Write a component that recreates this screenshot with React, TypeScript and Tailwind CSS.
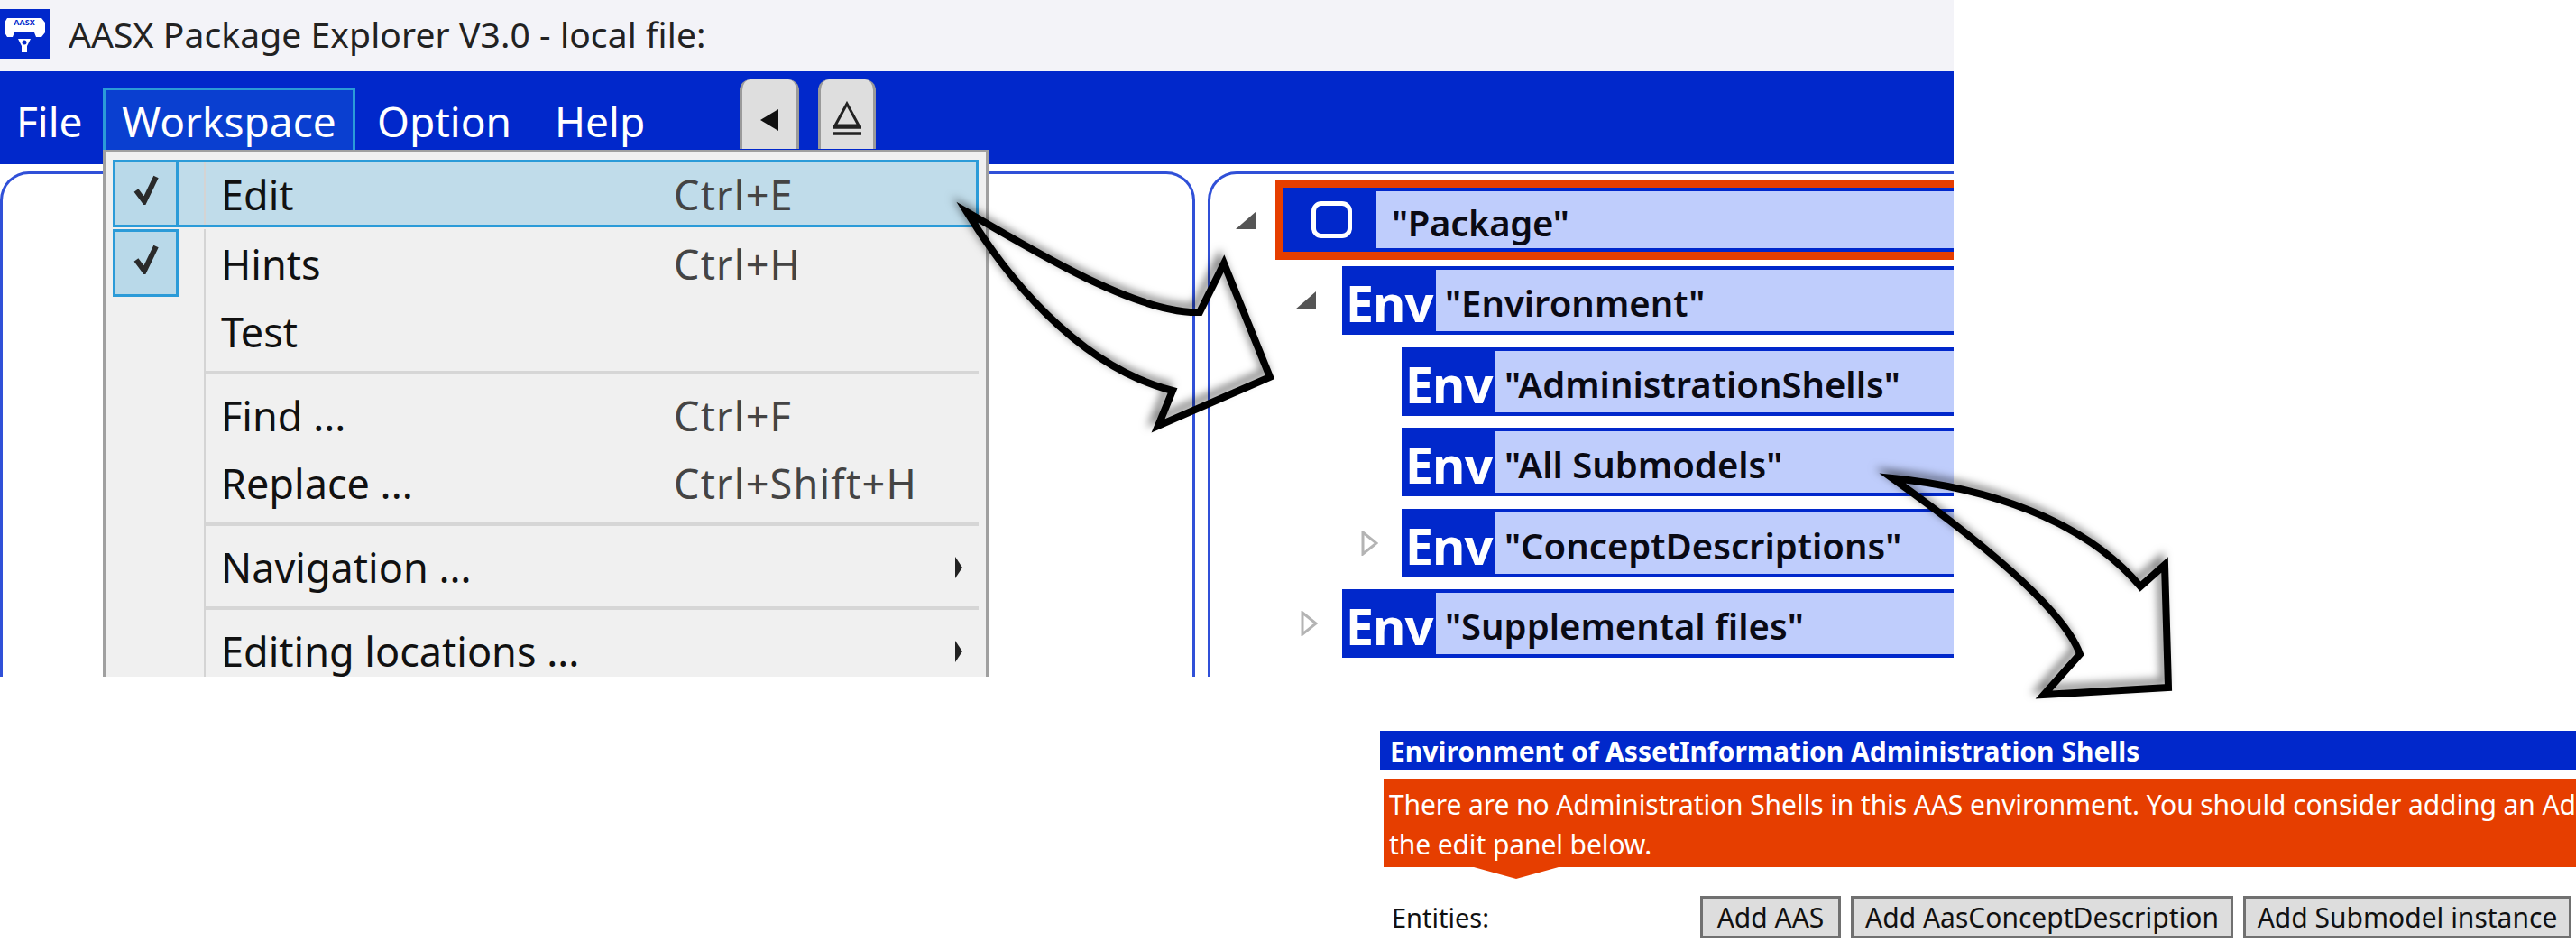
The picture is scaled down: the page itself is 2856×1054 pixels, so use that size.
import React from "react";

function Logo() {
  return (
    <svg width="55" height="55" viewBox="0 0 55 55" className="shrink-0">
      <rect width="55" height="55" fill="#0128cb" />
      <path d="M8 10h38l4 5v11l-4 5h-6l-2-5H16l-2 5H8l-3-5V15z" fill="#fff" />
      <text x="27" y="18" textAnchor="middle" fontSize="9" fontWeight="700" fill="#0128cb" fontFamily="Noto Sans, sans-serif">AASX</text>
      <path d="M20 33h14l-4 8v7h-6v-7z" fill="#fff" />
      <circle cx="27" cy="37" r="2.5" fill="#0128cb" />
    </svg>
  );
}

function MenuRow({ label, shortcut, checked, active, submenu }: { label: string; shortcut?: string; checked?: boolean; active?: boolean; submenu?: boolean }) {
  return (
    <div className={`flex h-[75px] items-stretch ${active ? "bg-[#c0dcea] outline-[3px] -outline-offset-[3px] outline-[#2b9bd8]" : ""}`}>
      <div className={`flex w-[73px] shrink-0 items-center justify-center pb-[10px] ${checked ? "border-[3px] border-[#2b9bd8] bg-[#b9d9e9]" : ""}`}>
        {checked && (
          <svg width="30" height="34" viewBox="0 0 30 34">
            <path d="M4 18l9 12L26 3" fill="none" stroke="#2a2a2a" strokeWidth="6" />
          </svg>
        )}
      </div>
      <div className="ml-[28px] flex flex-1 items-center border-l-[2px] border-[#d4d4d4] pt-[2px] pl-[17px]">
        <span className="w-[502px] text-[45px] leading-none text-[#111]">{label}</span>
        <span className="text-[45px] leading-none tracking-[1.2px] text-[#444]">{shortcut}</span>
        {submenu && (
          <svg width="10" height="24" viewBox="0 0 10 24" className="ml-auto mr-[17px]">
            <path d="M1 0l8 12L1 24z" fill="#222" />
          </svg>
        )}
      </div>
    </div>
  );
}

function MenuSeparator() {
  return (
    <div className="ml-[101px] flex h-[18px] items-center border-l-[2px] border-[#d4d4d4]">
      <div className="h-[4px] flex-1 bg-[#d6d6d6]" />
    </div>
  );
}

function Caret({ open, className }: { open?: boolean; className: string }) {
  if (open) {
    return (
      <svg width="23" height="20" viewBox="0 0 23 20" className={className}>
        <path d="M0 20L23 0v20z" fill="#555" />
      </svg>
    );
  }
  return (
    <svg width="19" height="28" viewBox="0 0 19 28" className={className}>
      <path d="M2 2l15 12L2 26z" fill="#fff" stroke="#b4b4b4" strokeWidth="3" />
    </svg>
  );
}

function EnvRow({ label, indent, caret }: { label: string; indent: string; caret?: React.ReactNode }) {
  return (
    <div className={`flex items-center ${indent}`}>
      <div className="flex w-[66px] shrink-0 justify-center">{caret}</div>
      <div className="flex h-[76px] flex-1 border-y-[4px] border-[#0128cb] bg-[#bfcdfc]">
        <div className="flex w-[104px] shrink-0 items-center justify-center bg-[#0128cb] pt-[4px] text-[56px] leading-none font-bold tracking-[-1px] text-white">Env</div>
        <div className="flex items-center pt-[6px] pl-[10px] text-[40px] leading-none font-semibold whitespace-nowrap text-[#0a0a14]">{label}</div>
      </div>
    </div>
  );
}

function ActionButton({ label, width }: { label: string; width: string }) {
  return (
    <div className={`flex h-[47px] items-center justify-center border-[3px] border-[#707070] bg-[#dddddd] text-[30px] leading-none whitespace-nowrap text-[#111] ${width}`}>{label}</div>
  );
}

export default function App() {
  return (
    <div className="relative h-[1054px] w-[2856px] overflow-hidden bg-white [font-family:'Noto_Sans',sans-serif]">
      <div className="relative flex h-[750px] w-[2166px] flex-col overflow-hidden">
        <div className="flex h-[79px] shrink-0 items-center gap-[21px] bg-[#f3f3f8] pb-[4px]">
          <Logo />
          <span className="text-[39px] leading-none tracking-[0.1px] text-[#222]">AASX Package Explorer V3.0 - local file:</span>
        </div>

        <div className="flex h-[103px] shrink-0 items-start bg-[#0128cb] text-[46px] leading-none text-white">
          <span className="mt-[32px] ml-[18px] w-[96px]">File</span>
          <span className="mt-[18px] flex h-[69px] w-[280px] items-center justify-center border-[3px] border-b-0 border-[#2b9bd8] bg-[#0a3fd0] pt-[2px]">Workspace</span>
          <span className="mt-[32px] ml-[24px] w-[197px]">Option</span>
          <span className="mt-[32px] w-[205px]">Help</span>
          <div className="mt-[9px] flex h-[77px] w-[66px] items-center justify-center rounded-t-[12px] border-x-[3px] border-[#9a9a9a] bg-[#dedede] pt-[12px]">
            <svg width="24" height="26" viewBox="0 0 24 26">
              <path d="M2 13L22 1v24z" fill="#111" />
            </svg>
          </div>
          <div className="mt-[9px] ml-[21px] flex h-[77px] w-[64px] items-center justify-center rounded-t-[12px] border-x-[3px] border-[#9a9a9a] bg-[#dedede] pt-[8px]">
            <svg width="36" height="38" viewBox="0 0 36 38">
              <path d="M18 3L5 27h26z" fill="none" stroke="#222" strokeWidth="3" />
              <path d="M2 29h32M2 36h32" stroke="#222" strokeWidth="3.5" />
            </svg>
          </div>
        </div>

        <div className="flex flex-1 gap-[14px] pt-[8px]">
          <div className="w-[1325px] shrink-0 rounded-t-[32px] border-x-[3px] border-t-[3px] border-[#3050d8]" />
          <div className="flex-1 rounded-tl-[32px] border-t-[3px] border-l-[3px] border-[#3050d8] pt-[6px]">
            <div className="flex items-center pl-[6px]">
              <div className="flex w-[66px] shrink-0 justify-center">
                <Caret open className="" />
              </div>
              <div className="h-[89px] flex-1 border-y-[9px] border-l-[9px] border-[#e63e00]">
                <div className="flex h-full border-y-[4px] border-l-[4px] border-[#0128cb] bg-[#bfcdfc]">
                  <div className="flex w-[99px] shrink-0 items-center justify-center bg-[#0128cb]">
                    <div className="h-[41px] w-[45px] rounded-[11px] border-[5px] border-white" />
                  </div>
                  <div className="flex items-center pt-[6px] pl-[17px] text-[40px] leading-none font-semibold tracking-[-0.3px] text-[#0a0a14]">"Package"</div>
                </div>
              </div>
            </div>
            <div className="mt-[7px] flex flex-col gap-[13.5px]">
              <EnvRow label={'"Environment"'} indent="pl-[80px]" caret={<Caret open className="mr-[16px]" />} />
              <EnvRow label={'"AdministrationShells"'} indent="pl-[146px]" />
              <EnvRow label={'"All Submodels"'} indent="pl-[146px]" />
              <EnvRow label={'"ConceptDescriptions"'} indent="pl-[146px]" caret={<Caret className="mr-[6px]" />} />
              <EnvRow label={'"Supplemental files"'} indent="pl-[80px]" caret={<Caret className="mr-[8px]" />} />
            </div>
          </div>
        </div>

        <div className="absolute top-[166px] left-[114px] h-[600px] w-[982px] border-x-[3px] border-t-[3px] border-[#a0a0a0] bg-[#f0f0f0] px-[8px] pt-[8px]">
          <MenuRow label="Edit" shortcut="Ctrl+E" checked active />
          <div className="h-[2px]" />
          <MenuRow label="Hints" shortcut="Ctrl+H" checked />
          <MenuRow label="Test" />
          <MenuSeparator />
          <MenuRow label="Find ..." shortcut="Ctrl+F" />
          <MenuRow label="Replace ..." shortcut="Ctrl+Shift+H" />
          <MenuSeparator />
          <MenuRow label="Navigation ..." submenu />
          <MenuSeparator />
          <MenuRow label="Editing locations ..." submenu />
        </div>
      </div>

      <div className="mt-[60px] ml-[1530px] w-[1326px] overflow-hidden">
        <div className="flex h-[43px] items-center bg-[#0128cb] pt-[2px] pl-[11px] text-[30px] leading-none font-bold whitespace-nowrap text-white">Environment of AssetInformation Administration Shells</div>
        <div className="mt-[10px] ml-[4px] flex h-[98px] flex-col justify-center gap-[16px] bg-[#e63e00] pt-[4px] pl-[6px] text-[30px] leading-[28px] tracking-[-0.1px] whitespace-nowrap text-white">
          <span>There are no Administration Shells in this AAS environment. You should consider adding an Administration Shell by clicking the button in</span>
          <span>the edit panel below.</span>
        </div>
        <svg width="94" height="13" viewBox="0 0 94 13" className="ml-[104px] block">
          <path d="M0 0h94L47 13z" fill="#e63e00" />
        </svg>
        <div className="mt-[19px] flex items-center">
          <span className="w-[355px] pl-[13px] text-[29px] leading-none text-[#111]">Entities:</span>
          <div className="flex gap-[11px]">
            <ActionButton label="Add AAS" width="w-[156px]" />
            <ActionButton label="Add AasConceptDescription" width="w-[424px]" />
            <ActionButton label="Add Submodel instance" width="w-[364px]" />
          </div>
        </div>
      </div>

      <svg className="pointer-events-none absolute inset-0" width="2856" height="1054" viewBox="0 0 2856 1054" fill="none">
        <defs>
          <filter id="arrow-shadow" x="-20%" y="-20%" width="140%" height="140%">
            <feDropShadow dx="-5" dy="-6" stdDeviation="5" floodColor="#000" floodOpacity="0.5" />
          </filter>
        </defs>
        <g stroke="#000" strokeWidth="8" strokeMiterlimit="12" filter="url(#arrow-shadow)">
          <path d="M1072 235C1150 280 1260 348 1330 346L1357 292L1408 418L1284 472L1300 433C1210 410 1130 330 1072 235Z" />
          <path d="M2098 530C2200 540 2310 575 2373 650L2400 626L2404 762L2266 770L2306 725C2290 680 2210 610 2098 530Z" />
        </g>
      </svg>
    </div>
  );
}
